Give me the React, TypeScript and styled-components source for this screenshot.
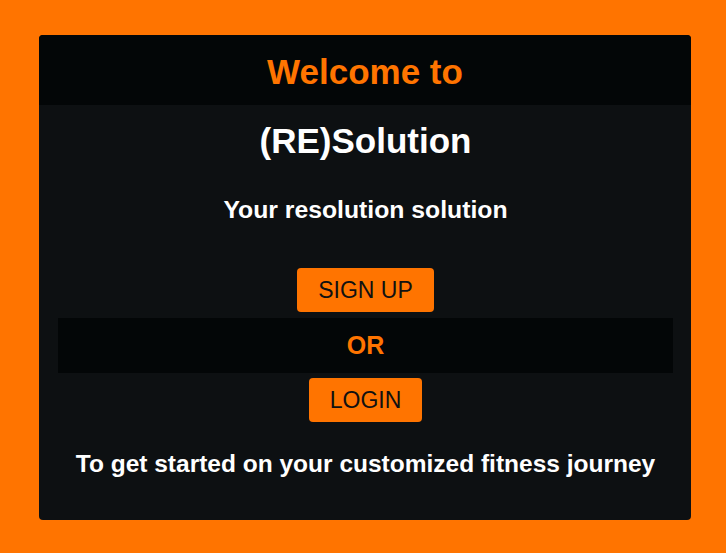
import styled, { createGlobalStyle } from "styled-components";

const GlobalStyle = createGlobalStyle`
  html, body {
    margin: 0;
    padding: 0;
    background: #ff7400;
    font-family: "Liberation Sans", Arial, sans-serif;
  }
`;

export default function App() {
  return (
    <>
      <GlobalStyle />
      <Page>
        <Card>
          <CardHeader>
            <Title $orange>Welcome to</Title>
          </CardHeader>
          <CardBody>
            <Title>(RE)Solution</Title>
            <Tagline>Your resolution solution</Tagline>
            <Actions>
              <ActionButton>SIGN UP</ActionButton>
              <OrBar>OR</OrBar>
              <ActionButton>LOGIN</ActionButton>
            </Actions>
            <Footnote>To get started on your customized fitness journey</Footnote>
          </CardBody>
        </Card>
      </Page>
    </>
  );
}

const Page = styled.div`
  padding: 35px 35px 33px 39px;
`;

const Card = styled.div`
  width: 652px;
  height: 485px;
  background: #0d1012;
  border-radius: 4px;
  overflow: hidden;
  display: flex;
  flex-direction: column;
`;

const CardHeader = styled.div`
  height: 70px;
  padding-top: 4px;
  box-sizing: border-box;
  background: #030607;
  display: flex;
  align-items: center;
  justify-content: center;
`;

const Title = styled.h1<{ $orange?: boolean }>`
  margin: 0;
  font-size: 35px;
  font-weight: bold;
  line-height: 42px;
  color: ${(p) => (p.$orange ? "#ff7400" : "#ffffff")};
  text-align: center;
`;

const CardBody = styled.div`
  padding: 15px 18px 0 19px;
  display: flex;
  flex-direction: column;
  align-items: stretch;
  text-align: center;
`;

const Tagline = styled.h3`
  margin: 33px 0 0;
  font-size: 24.75px;
  font-weight: bold;
  line-height: 29px;
  color: #ffffff;
`;

const Actions = styled.div`
  margin-top: 44px;
  display: flex;
  flex-direction: column;
  align-items: center;
`;

const ActionButton = styled.button`
  background: #ff7400;
  color: #111;
  border: none;
  border-radius: 4px;
  height: 44px;
  padding: 0 21px;
  font-family: "Liberation Sans", Arial, sans-serif;
  font-size: 23px;
  cursor: pointer;
`;

const OrBar = styled.div`
  align-self: stretch;
  height: 55px;
  margin: 6px 0 5px;
  background: #030607;
  color: #ff7400;
  font-size: 25px;
  font-weight: bold;
  display: flex;
  align-items: center;
  justify-content: center;
`;

const Footnote = styled.h3`
  margin: 27px 0 0;
  font-size: 24.5px;
  font-weight: bold;
  line-height: 29px;
  color: #ffffff;
`;
